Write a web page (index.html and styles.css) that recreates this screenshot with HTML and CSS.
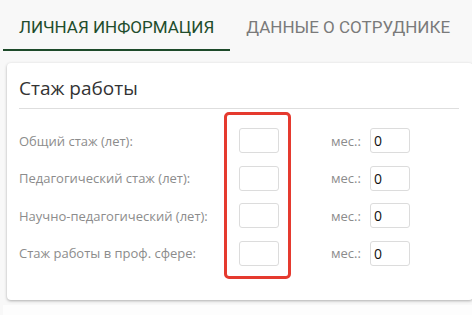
FILE: index.html
```html
<!DOCTYPE html>
<html lang="ru">
<head>
<meta charset="utf-8">
<link rel="stylesheet" href="styles.css">
</head>
<body>
<div class="page">
  <nav class="tabs">
    <div class="tab tab-active">ЛИЧНАЯ ИНФОРМАЦИЯ</div>
    <div class="tab">ДАННЫЕ О СОТРУДНИКЕ</div>
  </nav>
  <section class="card">
    <h2 class="card-title">Стаж работы</h2>
    <div class="rows">
      <div class="row">
        <span class="label">Общий стаж (лет):</span>
        <span class="field"></span>
        <span class="mes">мес.:</span>
        <span class="field">0</span>
      </div>
      <div class="row">
        <span class="label">Педагогический стаж (лет):</span>
        <span class="field"></span>
        <span class="mes">мес.:</span>
        <span class="field">0</span>
      </div>
      <div class="row">
        <span class="label">Научно-педагогический (лет):</span>
        <span class="field"></span>
        <span class="mes">мес.:</span>
        <span class="field">0</span>
      </div>
      <div class="row">
        <span class="label">Стаж работы в проф. сфере:</span>
        <span class="field"></span>
        <span class="mes">мес.:</span>
        <span class="field">0</span>
      </div>
    </div>
    <div class="highlight"></div>
  </section>
  <div class="next-block"></div>
</div>
</body>
</html>
```

FILE: styles.css
```css
html, body {
  margin: 0;
  padding: 0;
  background: #f8f8f8;
  overflow: hidden;
}

.page {
  width: 472px;
  height: 315px;
  overflow: hidden;
}

.tabs {
  display: flex;
  padding-left: 3px;
  height: 51px;
  font-family: Roboto, "Liberation Sans", sans-serif;
  font-size: 17px;
}

.tab {
  padding: 0 16px;
  height: 49px;
  line-height: 54px;
  color: #7a7a7a;
  white-space: nowrap;
}

.tab-active {
  color: #1f4d2c;
  border-bottom: 2px solid #1d4a2a;
}

.card {
  position: relative;
  margin: 12px 0 0 7px;
  width: 466px;
  box-sizing: border-box;
  height: 237px;
  padding: 0 14px 0 12px;
  background: #fff;
  border-radius: 4px;
  box-shadow: 0 1px 3px rgba(0, 0, 0, 0.3);
  font-family: "Open Sans", "Noto Sans", sans-serif;
}

.card-title {
  margin: 0;
  padding-top: 12px;
  height: 33px;
  line-height: 27px;
  font-size: 19px;
  font-weight: 400;
  color: #333;
  border-bottom: 1px solid #dedede;
}

.rows {
  display: flex;
  flex-direction: column;
  gap: 12.67px;
  padding-top: 19px;
}

.row {
  display: grid;
  grid-template-columns: 220px 40px 91px 40px;
  align-items: center;
  height: 25px;
}

.label {
  font-size: 13px;
  color: #8c8c8c;
  white-space: nowrap;
}

.mes {
  grid-column: 3;
  padding-left: 52px;
  font-size: 13px;
  color: #8c8c8c;
}

.field {
  box-sizing: border-box;
  height: 25px;
  border: 1px solid #dcdcdc;
  border-radius: 3px;
  padding-left: 3px;
  line-height: 23px;
  font-size: 14px;
  color: #111;
}

.highlight {
  position: absolute;
  left: 217px;
  top: 49px;
  width: 67px;
  height: 167px;
  box-sizing: border-box;
  border: 3px solid #e53a2f;
  border-radius: 5px;
}

.next-block {
  margin: 5px 0 0 3px;
  height: 20px;
  background: #fdfdfd;
}
```
